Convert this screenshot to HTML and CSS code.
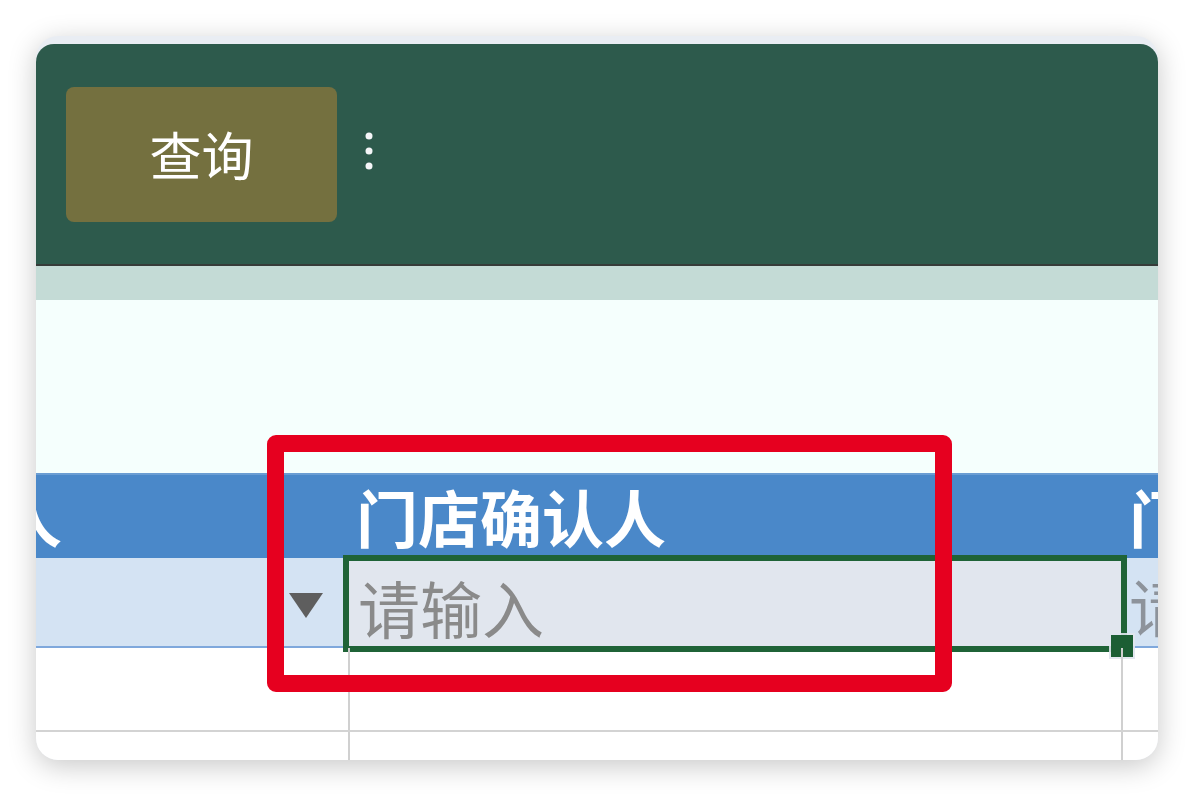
FILE: index.html
```html
<!DOCTYPE html>
<html lang="zh-CN">

<head>
    <meta charset="UTF-8">
    <meta name="viewport" content="width=device-width, initial-scale=1.0">
    <title>门店确认</title>
    <link rel="stylesheet" href="styles.css">
</head>

<body>
    <div class="card">
        <div class="toolbar">
            <button class="btn-query">查询</button>
            <svg class="more" width="10" height="44" viewBox="0 0 10 44">
                <circle cx="5" cy="6" r="3.5" fill="#f4f6f8" />
                <circle cx="5" cy="21" r="3.5" fill="#f4f6f8" />
                <circle cx="5" cy="36" r="3.5" fill="#f4f6f8" />
            </svg>
        </div>
        <div class="band"></div>
        <div class="blank"></div>

        <div class="sheet">
            <div class="grid">
                <!-- 表头 -->
                <div class="row head">
                    <div class="cell c1">门店确认人</div>
                    <div class="cell c2">门店确认人</div>
                    <div class="cell c3">门店确认时间</div>
                </div>
                <!-- 筛选行 -->
                <div class="row filter">
                    <div class="cell c1">
                        <span class="ph">请输入</span>
                        <svg class="arrow" width="34" height="25" viewBox="0 0 34 25">
                            <polygon points="0,0 34,0 17,25" fill="#5e5e5e" />
                        </svg>
                    </div>
                    <div class="cell c2">
                        <div class="editor">
                            <span class="ph">请输入</span>
                            <i class="handle"></i>
                        </div>
                    </div>
                    <div class="cell c3"><span class="ph">请输入</span></div>
                </div>
                <div class="row body">
                    <div class="cell c1"></div>
                    <div class="cell c2"></div>
                    <div class="cell c3"></div>
                </div>
                <div class="row body">
                    <div class="cell c1"></div>
                    <div class="cell c2"></div>
                    <div class="cell c3"></div>
                </div>
            </div>
        </div>
    </div>

    <div class="mark"></div>
</body>

</html>
```

FILE: styles.css
```css
* {
    margin: 0;
    padding: 0;
    box-sizing: border-box;
}

html,
body {
    width: 100%;
    height: 100%;
    background: #fff;
}

body {
    padding: 36px;
    font-family: "Noto Sans CJK SC", "Noto Sans", sans-serif;
}

.card {
    width: 1122px;
    height: 724px;
    padding-top: 8px;
    border-radius: 22px;
    overflow: hidden;
    background: #e9edf3;
    box-shadow: 0 6px 28px rgba(0, 0, 0, 0.22);
}

/* 顶部工具栏 */
.toolbar {
    height: 222px;
    display: flex;
    align-items: center;
    gap: 27px;
    padding-left: 30px;
    background: #2d5a4c;
    border-radius: 18px 18px 0 0;
    border-bottom: 2px solid #363b39;
}

.btn-query {
    width: 271px;
    height: 135px;
    border: none;
    border-radius: 8px;
    background: #74703f;
    color: #fff;
    font-family: inherit;
    font-size: 52px;
    line-height: 1;
}

.more {
    display: block;
    margin-top: -4px;
}

.band {
    height: 34px;
    background: #c4dbd6;
}

.blank {
    height: 173px;
    background: #f5fffd;
}

/* 表格 */
.sheet {
    overflow: hidden;
    background: #fff;
}

.grid {
    margin-left: -290px;
    width: 2000px;
}

.row {
    display: flex;
}

.cell {
    position: relative;
    display: flex;
    align-items: center;
    padding-left: 6px;
    white-space: nowrap;
    flex: none;
}

.c1 {
    width: 604px;
}

.c2 {
    width: 773px;
}

.c3 {
    width: 600px;
}

.head {
    height: 85px;
    background: #4a88c9;
    box-shadow: inset 0 2px 0 #6a9dd3;
    color: #fff;
    font-size: 62px;
    font-weight: bold;
    line-height: 1;
}

.filter {
    height: 90px;
    background: #d4e3f3;
    border-bottom: 2px solid #7fa8dc;
    font-size: 62px;
    line-height: 1;
}

.filter .cell {
    padding-top: 6px;
}

.ph {
    color: #8d939b;
}

.arrow {
    position: absolute;
    right: 27px;
    top: 35px;
}

/* 正在编辑的单元格 */
.editor {
    position: absolute;
    left: -7px;
    right: -4px;
    top: -3px;
    bottom: -6px;
    display: flex;
    align-items: center;
    padding: 6px 0 0 9px;
    background: #e1e6ee;
    border: 6px solid #1f6337;
}

.editor .ph {
    color: #8a8a8a;
}

.handle {
    position: absolute;
    right: -12px;
    bottom: -11px;
    width: 22px;
    height: 22px;
    background: #1c5e34;
    box-shadow: 0 0 0 2px rgba(225, 230, 238, 0.9);
}

.body {
    height: 84px;
    border-bottom: 2px solid #d3d3d3;
}

.body .cell {
    border-right: 2px solid #d0d0d0;
}

/* 红色标注框 */
.mark {
    position: absolute;
    left: 267px;
    top: 435px;
    width: 685px;
    height: 257px;
    border: 17px solid #e6001f;
    border-radius: 9px;
}
```
